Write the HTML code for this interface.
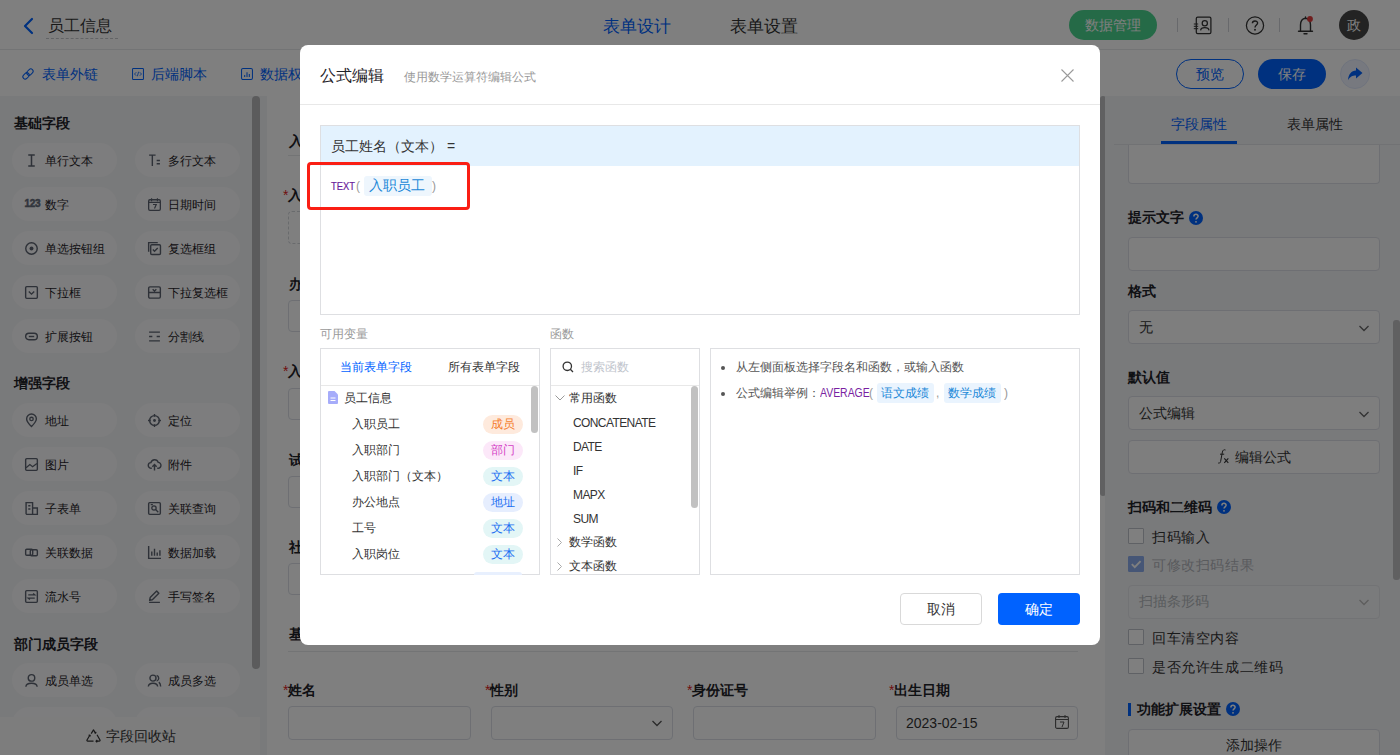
<!DOCTYPE html>
<html><head><meta charset="utf-8">
<style>
*{box-sizing:border-box;margin:0;padding:0}
html,body{width:1400px;height:755px;overflow:hidden;background:#fff;font-family:"Liberation Sans",sans-serif;color:#1f2329}
.a{position:absolute}
.t{position:absolute;white-space:nowrap;line-height:20px}
svg{position:absolute;overflow:visible}
/* background page */
#hdr{left:0;top:0;width:1400px;height:50px;background:#fff;border-bottom:1px solid #e6e8eb}
#tb{left:0;top:50px;width:1400px;height:46px;background:#fff}
#lp{left:0;top:96px;width:267px;height:659px;background:#f3f4f7}
#gap{display:none}
#mid{left:267px;top:96px;width:839px;height:659px;background:#fff}
#rp{left:1105px;top:96px;width:295px;height:659px;background:#f3f4f7}
.pill{position:absolute;height:34px;width:105px;border-radius:17px;background:#fbfbfc}
.pill span{position:absolute;left:33px;top:8px;font-size:12px;line-height:20px;color:#1f2329;white-space:nowrap}
.pill svg{left:13px;top:10.5px;width:13px;height:13px}
.sec{position:absolute;left:14px;margin-top:1px;font-size:14px;font-weight:bold;line-height:20px;color:#1f2329}
.inp{position:absolute;border:1px solid #dcdfe6;border-radius:4px;background:#fff}
.lbl{position:absolute;font-size:14px;font-weight:bold;line-height:20px;color:#1f2329;white-space:nowrap}
.req{color:#e02020;font-weight:normal}
.rin{position:absolute;left:1128px;width:252px;height:34px;border:1px solid #dcdfe6;border-radius:4px;background:#fcfcfd}
.chk{position:absolute;left:1128px;width:16px;height:16px;border:1px solid #bfc3ca;border-radius:1px;background:#fff}
#ov{left:0;top:0;width:1400px;height:755px;background:rgba(0,0,0,.5)}
/* modal */
#md{left:300px;top:45px;width:800px;height:600px;background:#fff;border-radius:8px}
.box{position:absolute;border:1px solid #dedfe2;background:#fff}
.tag{position:absolute;left:483px;width:40px;height:19px;border-radius:10px;font-size:12px;line-height:19px;text-align:center}
.vi{position:absolute;left:352px;font-size:12px;line-height:20px;color:#333;white-space:nowrap}
.fn{position:absolute;left:573px;margin-top:1px;font-size:12px;line-height:20px;color:#333;white-space:nowrap;letter-spacing:-0.6px}
</style></head><body>

<!-- ================= HEADER ================= -->
<div id="hdr" class="a"></div>
<svg style="left:0;top:0" width="1" height="1"></svg>
<svg style="left:22px;top:17px" width="14" height="18" viewBox="0 0 14 18"><path d="M10 2 L3 9 L10 16" fill="none" stroke="#0062ff" stroke-width="2.2" stroke-linecap="round" stroke-linejoin="round"/></svg>
<div class="t" style="left:48px;top:16px;font-size:16px;color:#333">员工信息</div>
<div class="a" style="left:46px;top:38px;width:72px;border-top:1px dashed #c7c9cc"></div>
<div class="t" style="left:603px;top:16px;font-size:16.5px;color:#0062ff">表单设计</div>
<div class="t" style="left:730px;top:16px;font-size:16.5px;color:#333">表单设置</div>
<div class="a" style="left:1069px;top:10px;width:88px;height:30px;border-radius:15px;background:#4bd48f"></div>
<div class="t" style="left:1085px;top:15px;font-size:14px;color:#fff">数据管理</div>
<div class="a" style="left:1177px;top:18px;width:1px;height:14px;background:#d0d3d8"></div>
<div class="a" style="left:1228px;top:18px;width:1px;height:14px;background:#d0d3d8"></div>
<div class="a" style="left:1279px;top:18px;width:1px;height:14px;background:#d0d3d8"></div>
<!-- contacts icon -->
<svg style="left:1193px;top:16px" width="20" height="20" viewBox="0 0 20 20"><rect x="3.3" y="1.2" width="14.6" height="16.4" rx="1.4" fill="none" stroke="#333" stroke-width="1.25"/><circle cx="11.8" cy="7.2" r="2.6" fill="none" stroke="#333" stroke-width="1.25"/><path d="M7.6 14.4 C8 10.8 15.6 10.8 16 14.4" fill="none" stroke="#333" stroke-width="1.25"/><path d="M0.8 8h4.4M0.8 10.3h4.4M0.8 12.7h4.4" stroke="#333" stroke-width="1"/></svg>
<svg style="left:1245px;top:15px" width="20" height="21" viewBox="0 0 20 21"><circle cx="10" cy="10.4" r="8.6" fill="none" stroke="#333" stroke-width="1.25"/><path d="M7.4 8.2 C7.4 5.2 12.6 5.2 12.6 8.1 C12.6 10 10 10.1 10 12.4" fill="none" stroke="#333" stroke-width="1.4"/><circle cx="10" cy="14.8" r="0.95" fill="#333"/></svg>
<svg style="left:1296px;top:14px" width="20" height="22" viewBox="0 0 20 22"><path d="M4.5 17 V11 C4.5 7.3 6.5 4.6 9.5 4.2 V3 M9.5 4.2 C12.5 4.6 14.5 7.3 14.5 11 V17 M2.5 17.2 H16.5" fill="none" stroke="#333" stroke-width="1.4" stroke-linejoin="round" stroke-linecap="round"/><path d="M8 19.8 H11" stroke="#333" stroke-width="1.4" stroke-linecap="round"/><circle cx="14" cy="5" r="2.9" fill="#e03c3c"/></svg>
<div class="a" style="left:1339px;top:10px;width:30px;height:30px;border-radius:15px;background:#474747"></div>
<div class="t" style="left:1347px;top:15px;font-size:14px;color:#fff">政</div>

<!-- ================= TOOLBAR ================= -->
<div id="tb" class="a"></div>
<svg style="left:22px;top:68px" width="12" height="12" viewBox="0 0 13 13"><g transform="rotate(-45 6.5 6.5)" fill="none" stroke="#0062ff" stroke-width="1.1"><rect x="-0.3" y="4" width="7.6" height="5" rx="2.5"/><rect x="5.7" y="4" width="7.6" height="5" rx="2.5"/></g></svg>
<div class="t" style="left:42px;top:64px;font-size:14px;color:#0062ff">表单外链</div>
<svg style="left:132px;top:68px" width="12" height="12" viewBox="0 0 13 13"><rect x="0.6" y="0.6" width="11.8" height="11.8" rx="0.8" fill="none" stroke="#0062ff" stroke-width="1.1"/><path d="M4.6 4.6 L2.7 6.5 L4.6 8.4 M8.4 4.6 L10.3 6.5 L8.4 8.4 M7.2 4 L5.8 9" fill="none" stroke="#0062ff" stroke-width="0.9"/></svg>
<div class="t" style="left:151px;top:64px;font-size:14px;color:#0062ff">后端脚本</div>
<svg style="left:241px;top:68px" width="12" height="12" viewBox="0 0 13 13"><rect x="0.6" y="0.6" width="11.8" height="11.8" rx="1.5" fill="none" stroke="#0062ff" stroke-width="1.1"/><path d="M4 9.8 V7.5 M6.5 9.8 V4.5 M9 9.8 V6.5" stroke="#0062ff" stroke-width="1.1"/></svg>
<div class="t" style="left:260px;top:64px;font-size:14px;color:#0062ff">数据权限</div>
<div class="a" style="left:1176px;top:59px;width:68px;height:30px;border-radius:15px;border:1px solid #0062ff"></div>
<div class="t" style="left:1196px;top:64px;font-size:14px;color:#0062ff">预览</div>
<div class="a" style="left:1258px;top:59px;width:68px;height:30px;border-radius:15px;background:#0062ff"></div>
<div class="t" style="left:1278px;top:64px;font-size:14px;color:#fff">保存</div>
<div class="a" style="left:1340px;top:59px;width:30px;height:30px;border-radius:15px;background:#eef3ff;border:1px solid #dfe7fb"></div>
<svg style="left:1347px;top:66px" width="16" height="16" viewBox="0 0 16 16"><path d="M9 1.5 L15.5 7 L9 12.5 V9.4 C5.5 9.4 2.8 10.5 1 14.2 C1.4 8.5 4.5 4.6 9 4.6 Z" fill="#0062ff"/></svg>

<!-- ================= LEFT PANEL ================= -->
<div id="lp" class="a"></div>
<div id="gap" class="a"></div>
<div class="a" style="left:252px;top:96px;width:8px;height:573px;border-radius:4px;background:#b6b7b9"></div>

<div class="sec" style="top:112px">基础字段</div>
<div class="pill" style="left:12px;top:143px"><svg width="12" height="12" viewBox="0 0 12 12"><path d="M3 1h6M6 1v10M3 11h6" stroke="#5c6370" stroke-width="1.4"/></svg><span>单行文本</span></div>
<div class="pill" style="left:135px;top:143px"><svg width="12" height="12" viewBox="0 0 12 12"><path d="M1 1h6M4 1v10M8 6h3M8 9h3" stroke="#5c6370" stroke-width="1.3"/></svg><span>多行文本</span></div>
<div class="pill" style="left:12px;top:187px"><span style="left:12.5px;top:7px;font-size:10px;font-weight:700;letter-spacing:-0.3px;color:#646b7a;-webkit-text-stroke:0.5px #646b7a">123</span><span>数字</span></div>
<div class="pill" style="left:135px;top:187px"><svg width="12" height="12" viewBox="0 0 12 12"><rect x="0.6" y="1.6" width="10.8" height="9.8" rx="1.2" fill="none" stroke="#5c6370" stroke-width="1.2"/><path d="M0.6 4h10.8M3.3 0.3v2.6M8.7 0.3v2.6M4.6 6h3l-1.6 3.6" fill="none" stroke="#5c6370" stroke-width="1.1"/></svg><span>日期时间</span></div>
<div class="pill" style="left:12px;top:231px"><svg width="12" height="12" viewBox="0 0 12 12"><circle cx="6" cy="6" r="5.3" fill="none" stroke="#5c6370" stroke-width="1.3"/><circle cx="6" cy="6" r="1.8" fill="#5c6370"/></svg><span>单选按钮组</span></div>
<div class="pill" style="left:135px;top:231px"><svg width="12" height="12" viewBox="0 0 12 12"><rect x="2.5" y="2.5" width="9" height="9" rx="1" fill="none" stroke="#5c6370" stroke-width="1.3"/><path d="M0.6 9V0.6H9" fill="none" stroke="#5c6370" stroke-width="1.3"/><path d="M4.5 7l1.5 1.5 3-3" fill="none" stroke="#5c6370" stroke-width="1.3"/></svg><span>复选框组</span></div>
<div class="pill" style="left:12px;top:275px"><svg width="12" height="12" viewBox="0 0 12 12"><rect x="0.6" y="0.6" width="10.8" height="10.8" rx="1" fill="none" stroke="#5c6370" stroke-width="1.3"/><path d="M3.5 5l2.5 2.5 2.5-2.5" fill="none" stroke="#5c6370" stroke-width="1.3"/></svg><span>下拉框</span></div>
<div class="pill" style="left:135px;top:275px"><svg width="12" height="12" viewBox="0 0 12 12"><rect x="0.6" y="0.8" width="10.8" height="10.4" rx="1.2" fill="none" stroke="#5c6370" stroke-width="1.3"/><path d="M0.6 6h10.8M4.3 3l1.7 1.6 1.7-1.6" fill="none" stroke="#5c6370" stroke-width="1.2"/></svg><span>下拉复选框</span></div>
<div class="pill" style="left:12px;top:319px"><svg width="12" height="12" viewBox="0 0 12 12"><rect x="0.6" y="3" width="10.8" height="6" rx="3" fill="none" stroke="#5c6370" stroke-width="1.3"/><path d="M3.5 6h5" stroke="#5c6370" stroke-width="1.3"/></svg><span>扩展按钮</span></div>
<div class="pill" style="left:135px;top:319px"><svg width="12" height="12" viewBox="0 0 12 12"><path d="M1 2h10M1 6h3M8 6h3M1 10h10" stroke="#5c6370" stroke-width="1.3"/></svg><span>分割线</span></div>

<div class="sec" style="top:372px">增强字段</div>
<div class="pill" style="left:12px;top:403px"><svg width="12" height="12" viewBox="0 0 12 12"><path d="M6 11.5 C2 7.5 1.5 6 1.5 4.5 a4.5 4.5 0 0 1 9 0 C10.5 6 10 7.5 6 11.5Z" fill="none" stroke="#5c6370" stroke-width="1.3"/><circle cx="6" cy="4.6" r="1.6" fill="none" stroke="#5c6370" stroke-width="1.2"/></svg><span>地址</span></div>
<div class="pill" style="left:135px;top:403px"><svg width="12" height="12" viewBox="0 0 12 12"><circle cx="6" cy="6" r="4.5" fill="none" stroke="#5c6370" stroke-width="1.3"/><circle cx="6" cy="6" r="1.3" fill="#5c6370"/><path d="M6 0v2.5M6 9.5V12M0 6h2.5M9.5 6H12" stroke="#5c6370" stroke-width="1.3"/></svg><span>定位</span></div>
<div class="pill" style="left:12px;top:447px"><svg width="12" height="12" viewBox="0 0 12 12"><rect x="0.6" y="0.6" width="10.8" height="10.8" rx="1" fill="none" stroke="#5c6370" stroke-width="1.3"/><path d="M1 9 L4.5 6 L7 8 L11 5" fill="none" stroke="#5c6370" stroke-width="1.2"/></svg><span>图片</span></div>
<div class="pill" style="left:135px;top:447px"><svg width="12" height="12" viewBox="0 0 12 12"><path d="M3.5 9.5H3a2.6 2.6 0 0 1-.3-5.2A3.5 3.5 0 0 1 9.4 4 2.6 2.6 0 0 1 9 9.5h-.5" fill="none" stroke="#5c6370" stroke-width="1.3"/><path d="M6 11.5V6M4 8l2-2 2 2" fill="none" stroke="#5c6370" stroke-width="1.3"/></svg><span>附件</span></div>
<div class="pill" style="left:12px;top:491px"><svg width="12" height="12" viewBox="0 0 12 12"><path d="M1 11.4V0.6h6v10.8M7 5.5h4.4v5.9H1M3 3.5h2M3 6.5h2" fill="none" stroke="#5c6370" stroke-width="1.3"/></svg><span>子表单</span></div>
<div class="pill" style="left:135px;top:491px"><svg width="12" height="12" viewBox="0 0 12 12"><rect x="0.6" y="0.6" width="10.8" height="10.8" rx="1" fill="none" stroke="#5c6370" stroke-width="1.3"/><circle cx="5.5" cy="5.5" r="2" fill="none" stroke="#5c6370" stroke-width="1.2"/><path d="M7 7l2.5 2.5M2.5 2.5h2" stroke="#5c6370" stroke-width="1.2"/></svg><span>关联查询</span></div>
<div class="pill" style="left:12px;top:535px"><svg width="12" height="12" viewBox="0 0 12 12"><rect x="0.6" y="3" width="6.5" height="5.5" rx="1" fill="none" stroke="#5c6370" stroke-width="1.3"/><rect x="4.9" y="3.5" width="6.5" height="5.5" rx="1" fill="none" stroke="#5c6370" stroke-width="1.3"/></svg><span>关联数据</span></div>
<div class="pill" style="left:135px;top:535px"><svg width="12" height="12" viewBox="0 0 12 12"><path d="M0.6 0v11.4H12M3.5 9V5M6 9V2.5M8.5 9V6M11 9V4" fill="none" stroke="#5c6370" stroke-width="1.3"/></svg><span>数据加载</span></div>
<div class="pill" style="left:12px;top:579px"><svg width="12" height="12" viewBox="0 0 12 12"><rect x="0.6" y="0.6" width="10.8" height="10.8" rx="1" fill="none" stroke="#5c6370" stroke-width="1.3"/><path d="M3 4.5h6l-1.5-1.2M9 7.5H3l1.5 1.2" fill="none" stroke="#5c6370" stroke-width="1.2"/></svg><span>流水号</span></div>
<div class="pill" style="left:135px;top:579px"><svg width="12" height="12" viewBox="0 0 12 12"><path d="M1.5 9.5 L2 7 L8 1 L10 3 L4 9 Z M1 11.4h10" fill="none" stroke="#5c6370" stroke-width="1.3" stroke-linejoin="round"/></svg><span>手写签名</span></div>

<div class="sec" style="top:633px">部门成员字段</div>
<div class="pill" style="left:12px;top:663px"><svg width="12" height="12" viewBox="0 0 12 12"><circle cx="6" cy="3.6" r="3" fill="none" stroke="#5c6370" stroke-width="1.3"/><path d="M0.8 11.8 C1.2 7.5 10.8 7.5 11.2 11.8" fill="none" stroke="#5c6370" stroke-width="1.3"/></svg><span>成员单选</span></div>
<div class="pill" style="left:135px;top:663px"><svg width="12" height="12" viewBox="0 0 12 12"><circle cx="4.6" cy="3.8" r="2.8" fill="none" stroke="#5c6370" stroke-width="1.3"/><path d="M0.3 11.5 C0.6 7.6 8.6 7.6 8.9 11.5M8 1.2a2.8 2.8 0 0 1 0 5.3M10 7.5c1 .8 1.6 2 1.7 4" fill="none" stroke="#5c6370" stroke-width="1.3"/></svg><span>成员多选</span></div>
<div class="pill" style="left:12px;top:707px"></div>
<div class="pill" style="left:135px;top:707px"></div>
<div class="a" style="left:0;top:717px;width:260px;height:38px;background:#fafafb"></div>
<svg style="left:86px;top:729px" width="15" height="14" viewBox="0 0 15 14"><path d="M5.2 4.6 L7.5 0.9 L9.4 4 M8.3 3.5 L9.6 4.2 L10 2.8" fill="none" stroke="#333" stroke-width="1.2" stroke-linejoin="round"/><path d="M11 5.8 L14 11 a0.8 0.8 0 0 1-.7 1.2 H10 M11.3 11 L10 12.2 L11.3 13.3" fill="none" stroke="#333" stroke-width="1.2" stroke-linejoin="round"/><path d="M7.5 12.2 H1.7 a0.8 0.8 0 0 1-.7-1.2 L3.8 6.2 M2.6 6.4 L3.9 6 L4.4 7.4" fill="none" stroke="#333" stroke-width="1.2" stroke-linejoin="round"/></svg>
<div class="t" style="left:106px;top:726px;font-size:14px;color:#333">字段回收站</div>

<!-- ================= MIDDLE FORM ================= -->
<div id="mid" class="a"></div>
<div class="lbl" style="left:289px;top:131px">入职信息</div>
<div class="a" style="left:288px;top:155px;width:790px;height:1px;background:#e6e8eb"></div>
<div class="lbl" style="left:283px;top:185px"><span class="req">*</span>入职员工</div>
<div class="a" style="left:288px;top:211px;width:182px;height:33px;border:1px dashed #d3d6db;border-radius:4px"></div>
<div class="lbl" style="left:289px;top:274px">办公地点</div>
<div class="inp" style="left:288px;top:300px;width:182px;height:32px"></div>
<div class="lbl" style="left:283px;top:361px"><span class="req">*</span>入职部门</div>
<div class="inp" style="left:288px;top:388px;width:182px;height:32px"></div>
<div class="lbl" style="left:289px;top:450px">试用期</div>
<div class="inp" style="left:288px;top:476px;width:182px;height:32px"></div>
<div class="lbl" style="left:289px;top:537px">社保</div>
<div class="inp" style="left:288px;top:563px;width:182px;height:32px"></div>
<div class="lbl" style="left:289px;top:624px">基本信息</div>
<div class="a" style="left:288px;top:651px;width:790px;height:1px;background:#e6e8eb"></div>
<div class="lbl" style="left:283px;top:680px"><span class="req">*</span>姓名</div>
<div class="inp" style="left:288px;top:706px;width:183px;height:34px"></div>
<div class="lbl" style="left:485px;top:680px"><span class="req">*</span>性别</div>
<div class="inp" style="left:491px;top:706px;width:182px;height:34px"></div>
<svg style="left:651px;top:717px" width="12" height="12" viewBox="0 0 12 12"><path d="M1.5 4 L6 8.5 L10.5 4" fill="none" stroke="#555" stroke-width="1.3"/></svg>
<div class="lbl" style="left:687px;top:680px"><span class="req">*</span>身份证号</div>
<div class="inp" style="left:693px;top:706px;width:183px;height:34px"></div>
<div class="lbl" style="left:889px;top:680px"><span class="req">*</span>出生日期</div>
<div class="inp" style="left:896px;top:706px;width:182px;height:34px"></div>
<div class="t" style="left:906px;top:713px;font-size:14px;color:#333">2023-02-15</div>
<svg style="left:1055px;top:715px" width="14" height="14" viewBox="0 0 14 14"><rect x="0.6" y="1.6" width="12.8" height="11.8" rx="1.5" fill="none" stroke="#555" stroke-width="1.1"/><path d="M0.6 4.5h12.8M4 0v3M10 0v3M5 7h4l-2 5" fill="none" stroke="#555" stroke-width="1"/></svg>
<div class="a" style="left:1100px;top:96px;width:6px;height:400px;border-radius:3px;background:#c0c1c3"></div>

<!-- ================= RIGHT PANEL ================= -->
<div id="rp" class="a"></div>
<div class="t" style="left:1171px;top:114px;font-size:14px;color:#0062ff">字段属性</div>
<div class="t" style="left:1287px;top:114px;font-size:14px;color:#333">表单属性</div>
<div class="a" style="left:1114px;top:144px;width:286px;height:1px;background:#e3e5e8"></div>
<div class="a" style="left:1161px;top:141px;width:76px;height:3px;background:#0062ff"></div>
<div class="rin" style="top:145px;height:39px;border-top:none;border-radius:0 0 4px 4px"></div>
<div class="lbl" style="left:1128px;top:207px">提示文字</div>
<svg style="left:1189px;top:211px" width="14" height="14" viewBox="0 0 14 14"><circle cx="7" cy="7" r="7" fill="#0062ff"/><path d="M4.9 5.4 C4.9 2.7 9.1 2.7 9.1 5.2 C9.1 6.8 7 6.9 7 8.6" fill="none" stroke="#fff" stroke-width="1.5"/><circle cx="7" cy="10.8" r="0.9" fill="#fff"/></svg>
<div class="rin" style="top:237px"></div>
<div class="lbl" style="left:1128px;top:281px">格式</div>
<div class="rin" style="top:310px"></div>
<div class="t" style="left:1139px;top:317px;font-size:14px;color:#333">无</div>
<svg style="left:1358px;top:322px" width="12" height="12" viewBox="0 0 12 12"><path d="M1.5 4 L6 8.5 L10.5 4" fill="none" stroke="#666" stroke-width="1.3"/></svg>
<div class="lbl" style="left:1128px;top:367px">默认值</div>
<div class="rin" style="top:396px"></div>
<div class="t" style="left:1139px;top:403px;font-size:14px;color:#333">公式编辑</div>
<svg style="left:1358px;top:408px" width="12" height="12" viewBox="0 0 12 12"><path d="M1.5 4 L6 8.5 L10.5 4" fill="none" stroke="#666" stroke-width="1.3"/></svg>
<div class="rin" style="top:440px"></div>
<svg style="left:1217px;top:449px" width="13" height="15" viewBox="0 0 13 15"><path d="M8.5 1 C7 0.4 5.8 1 5.4 3 L3.6 12.5 C3.2 14 2.4 14.4 1.2 14" fill="none" stroke="#333" stroke-width="1"/><path d="M3 5.2 H7.2" stroke="#333" stroke-width="1"/><path d="M7.3 9.3 L11.3 13.8 M11.3 9.3 L7.3 13.8" stroke="#333" stroke-width="1.1"/></svg>
<div class="t" style="left:1235px;top:447px;font-size:14px;color:#333">编辑公式</div>
<div class="lbl" style="left:1128px;top:497px">扫码和二维码</div>
<svg style="left:1217px;top:500px" width="14" height="14" viewBox="0 0 14 14"><circle cx="7" cy="7" r="7" fill="#0062ff"/><path d="M4.9 5.4 C4.9 2.7 9.1 2.7 9.1 5.2 C9.1 6.8 7 6.9 7 8.6" fill="none" stroke="#fff" stroke-width="1.5"/><circle cx="7" cy="10.8" r="0.9" fill="#fff"/></svg>
<div class="chk" style="top:528px"></div>
<div class="t" style="left:1152px;top:527px;font-size:14px;letter-spacing:0.6px;color:#333">扫码输入</div>
<div class="chk" style="top:556px;background:#8cadec;border-color:#8cadec;border-radius:1px"></div>
<svg style="left:1130px;top:558px" width="12" height="12" viewBox="0 0 12 12"><path d="M1.8 6.2 L4.8 9.2 L10.6 3.2" fill="none" stroke="#fff" stroke-width="1.9"/></svg>
<div class="t" style="left:1152px;top:555px;font-size:14px;letter-spacing:0.6px;color:#b3b6bb">可修改扫码结果</div>
<div class="rin" style="top:585px;background:#f5f6f8;border-color:#e4e6ea"></div>
<div class="t" style="left:1139px;top:591px;font-size:14px;color:#b3b6bb">扫描条形码</div>
<svg style="left:1358px;top:596px" width="12" height="12" viewBox="0 0 12 12"><path d="M1.5 4 L6 8.5 L10.5 4" fill="none" stroke="#bbb" stroke-width="1.3"/></svg>
<div class="chk" style="top:629px"></div>
<div class="t" style="left:1152px;top:628px;font-size:14px;letter-spacing:0.6px;color:#333">回车清空内容</div>
<div class="chk" style="top:658px"></div>
<div class="t" style="left:1152px;top:657px;font-size:14px;letter-spacing:0.6px;color:#333">是否允许生成二维码</div>
<div class="a" style="left:1128px;top:703px;width:3px;height:13px;background:#0062ff"></div>
<div class="lbl" style="left:1137px;top:699px">功能扩展设置</div>
<svg style="left:1226px;top:702px" width="14" height="14" viewBox="0 0 14 14"><circle cx="7" cy="7" r="7" fill="#0062ff"/><path d="M4.9 5.4 C4.9 2.7 9.1 2.7 9.1 5.2 C9.1 6.8 7 6.9 7 8.6" fill="none" stroke="#fff" stroke-width="1.5"/><circle cx="7" cy="10.8" r="0.9" fill="#fff"/></svg>
<div class="rin" style="top:729px;height:40px"></div>
<div class="t" style="left:1226px;top:735px;font-size:14px;color:#333">添加操作</div>
<div class="a" style="left:1393px;top:320px;width:7px;height:260px;border-radius:3px;background:#c0c1c3"></div>

<!-- ================= OVERLAY ================= -->
<div id="ov" class="a"></div>

<!-- ================= MODAL ================= -->
<div id="md" class="a"></div>
<div class="t" style="left:320px;top:66px;font-size:16px;color:#1f2329">公式编辑</div>
<div class="t" style="left:404px;top:67px;font-size:12px;color:#999">使用数学运算符编辑公式</div>
<svg style="left:1061px;top:69px" width="13" height="13" viewBox="0 0 13 13"><path d="M0.5 0.5 L12.5 12.5 M12.5 0.5 L0.5 12.5" stroke="#9a9a9a" stroke-width="1.1"/></svg>
<div class="a" style="left:300px;top:104px;width:800px;height:1px;background:#e8e8e8"></div>

<div class="box" style="left:320px;top:125px;width:760px;height:190px"></div>
<div class="a" style="left:321px;top:126px;width:758px;height:40px;background:#e3f2fe"></div>
<div class="t" style="left:331px;top:136px;font-size:14px;color:#333">员工姓名（文本）&nbsp;=</div>
<div class="t" style="left:331px;top:176px;font-size:11px;color:#6a1b9a;-webkit-text-stroke:0.2px #6a1b9a;transform:scaleX(0.85);transform-origin:0 0">TEXT</div><div class="t" style="left:356px;top:176px;font-size:12px;color:#999">(</div>
<div class="a" style="left:364px;top:176px;width:68px;height:20px;border-radius:3px;background:#eef6fd"></div>
<div class="t" style="left:369px;top:175px;font-size:14px;color:#1a88d8">入职员工</div>
<div class="t" style="left:432px;top:176px;font-size:12px;color:#999">)</div>
<div class="a" style="left:307px;top:162px;width:163px;height:48px;border:3px solid #fa1e14;border-radius:4px"></div>

<div class="t" style="left:320px;top:324px;font-size:12px;color:#999">可用变量</div>
<div class="t" style="left:550px;top:324px;font-size:12px;color:#999">函数</div>

<div class="box" style="left:320px;top:348px;width:220px;height:227px"></div>
<div class="a" style="left:321px;top:385px;width:218px;height:1px;background:#e8e8e8"></div>
<div class="t" style="left:340px;top:357px;font-size:12px;color:#0062ff">当前表单字段</div>
<div class="t" style="left:448px;top:357px;font-size:12px;color:#333">所有表单字段</div>
<svg style="left:328px;top:391px" width="10" height="13" viewBox="0 0 10 13"><path d="M0 1 a1 1 0 0 1 1-1 H6.5 L10 3.5 V12 a1 1 0 0 1-1 1 H1 a1 1 0 0 1-1-1Z" fill="#a6acfa"/><path d="M2.5 7h5M2.5 9.5h5" stroke="#fff" stroke-width="1"/></svg>
<div class="t" style="left:344px;top:388px;font-size:12px;color:#333">员工信息</div>
<div class="vi" style="top:414px">入职员工</div>
<div class="tag" style="top:415px;background:#feeadd;color:#f57d2c">成员</div>
<div class="vi" style="top:440px">入职部门</div>
<div class="tag" style="top:441px;background:#fce8f9;color:#d43fc6">部门</div>
<div class="vi" style="top:466px">入职部门（文本）</div>
<div class="tag" style="top:467px;background:#e3f6f6;color:#1c6ff2">文本</div>
<div class="vi" style="top:492px">办公地点</div>
<div class="tag" style="top:493px;background:#e6eefe;color:#1c6ff2">地址</div>
<div class="vi" style="top:518px">工号</div>
<div class="tag" style="top:519px;background:#e3f6f6;color:#1c6ff2">文本</div>
<div class="vi" style="top:544px">入职岗位</div>
<div class="tag" style="top:545px;background:#e3f6f6;color:#1c6ff2">文本</div>
<div class="a" style="left:474px;top:572px;width:48px;height:3px;border-radius:3px 3px 0 0;background:#e8f0fe"></div>
<div class="a" style="left:531px;top:386px;width:7px;height:47px;border-radius:4px;background:#c1c1c1"></div>

<div class="box" style="left:550px;top:348px;width:150px;height:227px"></div>
<div class="a" style="left:551px;top:385px;width:148px;height:1px;background:#e8e8e8"></div>
<svg style="left:562px;top:361px" width="12" height="12" viewBox="0 0 12 12"><circle cx="5.3" cy="5.3" r="4.2" fill="none" stroke="#333" stroke-width="1.3"/><path d="M8.3 8.3 L11 11" stroke="#333" stroke-width="1.3"/></svg>
<div class="t" style="left:581px;top:357px;font-size:12px;color:#c0c4cc">搜索函数</div>
<svg style="left:555px;top:395px" width="10" height="6" viewBox="0 0 10 6"><path d="M0.5 0.5 L5 5 L9.5 0.5" fill="none" stroke="#999" stroke-width="1"/></svg>
<div class="t" style="left:569px;top:388px;font-size:12px;color:#333">常用函数</div>
<div class="fn" style="top:412px">CONCATENATE</div>
<div class="fn" style="top:436px">DATE</div>
<div class="fn" style="top:460px">IF</div>
<div class="fn" style="top:484px">MAPX</div>
<div class="fn" style="top:508px">SUM</div>
<svg style="left:557px;top:538px" width="5" height="9" viewBox="0 0 5 9"><path d="M0.5 0.5 L4.5 4.5 L0.5 8.5" fill="none" stroke="#aaa" stroke-width="1"/></svg>
<div class="t" style="left:569px;top:532px;font-size:12px;color:#333">数学函数</div>
<svg style="left:557px;top:562px" width="5" height="9" viewBox="0 0 5 9"><path d="M0.5 0.5 L4.5 4.5 L0.5 8.5" fill="none" stroke="#aaa" stroke-width="1"/></svg>
<div class="t" style="left:569px;top:556px;font-size:12px;color:#333">文本函数</div>
<div class="a" style="left:691px;top:386px;width:7px;height:122px;border-radius:4px;background:#c1c1c1"></div>

<div class="box" style="left:710px;top:348px;width:370px;height:227px"></div>
<div class="a" style="left:721px;top:366px;width:4px;height:4px;border-radius:2px;background:#555"></div>
<div class="t" style="left:736px;top:357px;font-size:12px;color:#555">从左侧面板选择字段名和函数，或输入函数</div>
<div class="a" style="left:721px;top:392px;width:4px;height:4px;border-radius:2px;background:#555"></div>
<div class="t" style="left:736px;top:383px;font-size:12px;color:#555">公式编辑举例：</div><div class="t" style="left:820px;top:383px;font-size:12px;color:#7a1fa2;transform:scaleX(0.87);transform-origin:0 0">AVERAGE</div><div class="t" style="left:869px;top:383px;font-size:12px;color:#999">(</div>
<div class="a" style="left:877px;top:383px;width:57px;height:20px;border-radius:3px;background:#eaf4fe"></div>
<div class="t" style="left:881px;top:383px;font-size:12px;color:#1a88d8">语文成绩</div>
<div class="t" style="left:936px;top:383px;font-size:12px;color:#999">,</div>
<div class="a" style="left:944px;top:383px;width:57px;height:20px;border-radius:3px;background:#eaf4fe"></div>
<div class="t" style="left:948px;top:383px;font-size:12px;color:#1a88d8">数学成绩</div>
<div class="t" style="left:1004px;top:383px;font-size:12px;color:#999">)</div>

<div class="a" style="left:900px;top:593px;width:82px;height:32px;border:1px solid #d9d9d9;border-radius:4px;background:#fff"></div>
<div class="t" style="left:927px;top:599px;font-size:14px;color:#333">取消</div>
<div class="a" style="left:998px;top:593px;width:82px;height:32px;border-radius:4px;background:#0062ff"></div>
<div class="t" style="left:1025px;top:599px;font-size:14px;color:#fff">确定</div>

</body></html>
